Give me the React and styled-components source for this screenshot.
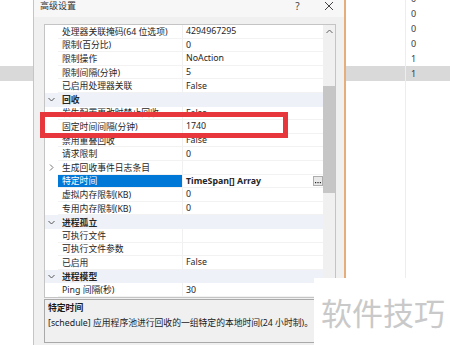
import React from "react";
import styled, { createGlobalStyle } from "styled-components";

const GlobalStyle = createGlobalStyle`
  html, body { margin: 0; padding: 0; background: #fff; }
  #root { width: 450px; height: 345px; }
`;

const FONT = `"Noto Sans", "Noto Sans CJK SC", sans-serif`;

const Screen = styled.div`
  position: relative;
  width: 450px;
  height: 345px;
  overflow: hidden;
  background: #fff;
  font-family: ${FONT};
  font-size: 8.8px;
  color: #262626;
`;

const BackList = styled.div`
  display: flex;
  flex-direction: column;
  margin-top: -9px;
`;

const BackRow = styled.div`
  height: 15px;
  display: flex;
  background: ${p => (p.$active ? "#d9d9d9" : "transparent")};
`;

const BackCell = styled.div`
  margin-left: 405px;
  padding-left: 5px;
  border-left: 1px solid #ededed;
  display: flex;
  align-items: center;
  color: #3a3a3a;
  font-size: 9px;
`;

const Dialog = styled.div`
  position: absolute;
  left: 33px;
  top: -6px;
  width: 313px;
  height: 365px;
  box-sizing: border-box;
  background: #f0f0f0;
  border-left: 1px solid #cfc3b5;
  border-right: 2px solid #e4ad7b;
  display: flex;
  flex-direction: column;
`;

const TitleBar = styled.div`
  height: 23px;
  flex-shrink: 0;
  display: flex;
  align-items: center;
  padding-left: 6px;
  background: #f7f7f7;
`;

const Title = styled.div`
  flex: 1;
  color: #333;
  font-size: 9px;
`;

const TitleBtn = styled.div`
  width: 31px;
  height: 100%;
  display: flex;
  align-items: center;
  justify-content: center;
  color: #444;
  font-size: 10px;
`;

const Body = styled.div`
  flex: 1;
  display: flex;
  flex-direction: column;
  gap: 1px;
  padding: 7px 8px 0 10px;
`;

const Grid = styled.div`
  display: flex;
  height: 274px;
  box-sizing: border-box;
  border: 1px solid #c4c4c4;
  background: #fff;
`;

const Rows = styled.div`
  flex: 1;
  display: flex;
  flex-direction: column;
  overflow: hidden;
`;

const Row = styled.div`
  height: 13.6px;
  flex-shrink: 0;
  display: flex;
  background: ${p => (p.$category ? "#eef2f8" : "#fff")};
  font-weight: ${p => (p.$category ? 700 : 400)};
`;

const Gutter = styled.div`
  width: 13px;
  display: flex;
  align-items: center;
  justify-content: center;
`;

const NameCell = styled.div`
  width: ${p => (p.$category ? "auto" : "125px")};
  flex: ${p => (p.$category ? 1 : "none")};
  box-sizing: border-box;
  padding-left: 4px;
  display: flex;
  align-items: center;
  white-space: nowrap;
  overflow: hidden;
  border-right: ${p => (p.$category ? "none" : "1px solid #f0f0f0")};
  border-bottom: ${p => (p.$category ? "none" : "1px solid #f2f2f2")};
  background: ${p => (p.$selected ? "#0078d7" : "transparent")};
  color: ${p => (p.$selected ? "#fff" : "inherit")};
`;

const ValueCell = styled.div`
  flex: 1;
  padding-left: 3px;
  display: flex;
  align-items: center;
  white-space: nowrap;
  border-bottom: 1px solid #f2f2f2;
  font-weight: ${p => (p.$bold ? 700 : 400)};
`;

const MoreBtn = styled.div`
  margin-left: auto;
  width: 10px;
  height: 10px;
  box-sizing: border-box;
  border: 1px solid #adadad;
  background: #e9e9e9;
  display: flex;
  align-items: flex-end;
  justify-content: center;
`;

const ScrollBar = styled.div`
  width: 12px;
  background: #f0f0f0;
  display: flex;
  flex-direction: column;
`;

const ScrollArrow = styled.div`
  height: 13px;
  display: flex;
  align-items: center;
  justify-content: center;
`;

const Thumb = styled.div`
  margin-top: 48px;
  height: 107px;
  background: #c6c6c6;
`;

const Description = styled.div`
  height: 44px;
  box-sizing: border-box;
  border: 1px solid #a9a9a9;
  padding: 1px 3px;
  line-height: 15px;
  color: #1a1a1a;
`;

const DescTitle = styled.div`
  font-weight: 700;
`;

const Highlight = styled.div`
  position: absolute;
  left: 40px;
  top: 112px;
  width: 248px;
  height: 26px;
  box-sizing: border-box;
  border: 5px solid #e7363c;
`;

const Watermark = styled.div`
  position: absolute;
  right: 0;
  bottom: 0;
  width: 136px;
  height: 67px;
  background: #fff;
  display: flex;
  align-items: center;
  padding-left: 7px;
  box-sizing: border-box;
  font-family: "Noto Sans CJK SC", sans-serif;
  font-size: 31px;
  color: #c9c9c9;
`;

const ChevronDown = () => (
  <svg width="7" height="5" viewBox="0 0 7 5">
    <path d="M0.5 1 L3.5 4 L6.5 1" fill="none" stroke="#555" strokeWidth="1" />
  </svg>
);

const ChevronRight = () => (
  <svg width="5" height="7" viewBox="0 0 5 7">
    <path d="M1 0.5 L4 3.5 L1 6.5" fill="none" stroke="#777" strokeWidth="1" />
  </svg>
);

const ChevronUp = () => (
  <svg width="7" height="5" viewBox="0 0 7 5">
    <path d="M0.5 4 L3.5 1 L6.5 4" fill="none" stroke="#606060" strokeWidth="1" />
  </svg>
);

const Dots = () => (
  <svg width="6" height="4" viewBox="0 0 6 4">
    <rect x="0" y="1" width="1.2" height="1.2" fill="#222" />
    <rect x="2.4" y="1" width="1.2" height="1.2" fill="#222" />
    <rect x="4.8" y="1" width="1.2" height="1.2" fill="#222" />
  </svg>
);

const rows = [
  { name: "处理器关联掩码(64 位选项)", value: "4294967295" },
  { name: "限制(百分比)", value: "0" },
  { name: "限制操作", value: "NoAction" },
  { name: "限制间隔(分钟)", value: "5" },
  { name: "已启用处理器关联", value: "False" },
  { name: "回收", category: true },
  { name: "发生配置更改时禁止回收", value: "False" },
  { name: "固定时间间隔(分钟)", value: "1740" },
  { name: "禁用重叠回收", value: "False" },
  { name: "请求限制", value: "0" },
  { name: "生成回收事件日志条目", value: "", collapsed: true },
  { name: "特定时间", value: "TimeSpan[] Array", selected: true, more: true },
  { name: "虚拟内存限制(KB)", value: "0" },
  { name: "专用内存限制(KB)", value: "0" },
  { name: "进程孤立", category: true },
  { name: "可执行文件", value: "" },
  { name: "可执行文件参数", value: "" },
  { name: "已启用", value: "False" },
  { name: "进程模型", category: true },
  { name: "Ping 间隔(秒)", value: "30" },
];

const backValues = ["0", "0", "0", "0", "1", "1"];

export default function App() {
  const back = Array.from({ length: 25 }, (_, i) => backValues[i] || "");

  return (
    <Screen>
      <GlobalStyle />
      <BackList>
        {back.map((v, i) => (
          <BackRow key={i} $active={i === 5}>
            <BackCell>{v}</BackCell>
          </BackRow>
        ))}
      </BackList>

      <Dialog>
        <TitleBar>
          <Title>高级设置</Title>
          <TitleBtn>?</TitleBtn>
          <TitleBtn>
            <svg width="10" height="10" viewBox="0 0 10 10">
              <path d="M1 1 L9 9 M9 1 L1 9" stroke="#444" strokeWidth="1" />
            </svg>
          </TitleBtn>
        </TitleBar>
        <Body>
          <Grid>
            <Rows>
              {rows.map((r, i) => (
                <Row key={i} $category={r.category}>
                  <Gutter>
                    {r.category && <ChevronDown />}
                    {r.collapsed && <ChevronRight />}
                  </Gutter>
                  <NameCell $category={r.category} $selected={r.selected}>
                    {r.name}
                  </NameCell>
                  {!r.category && (
                    <ValueCell $bold={r.selected}>
                      {r.value}
                      {r.more && (
                        <MoreBtn>
                          <Dots />
                        </MoreBtn>
                      )}
                    </ValueCell>
                  )}
                </Row>
              ))}
            </Rows>
            <ScrollBar>
              <ScrollArrow>
                <ChevronUp />
              </ScrollArrow>
              <Thumb />
            </ScrollBar>
          </Grid>
          <Description>
            <DescTitle>特定时间</DescTitle>
            <div>[schedule] 应用程序池进行回收的一组特定的本地时间(24 小时制)。</div>
          </Description>
        </Body>
      </Dialog>

      <Highlight />
      <Watermark>软件技巧</Watermark>
    </Screen>
  );
}
